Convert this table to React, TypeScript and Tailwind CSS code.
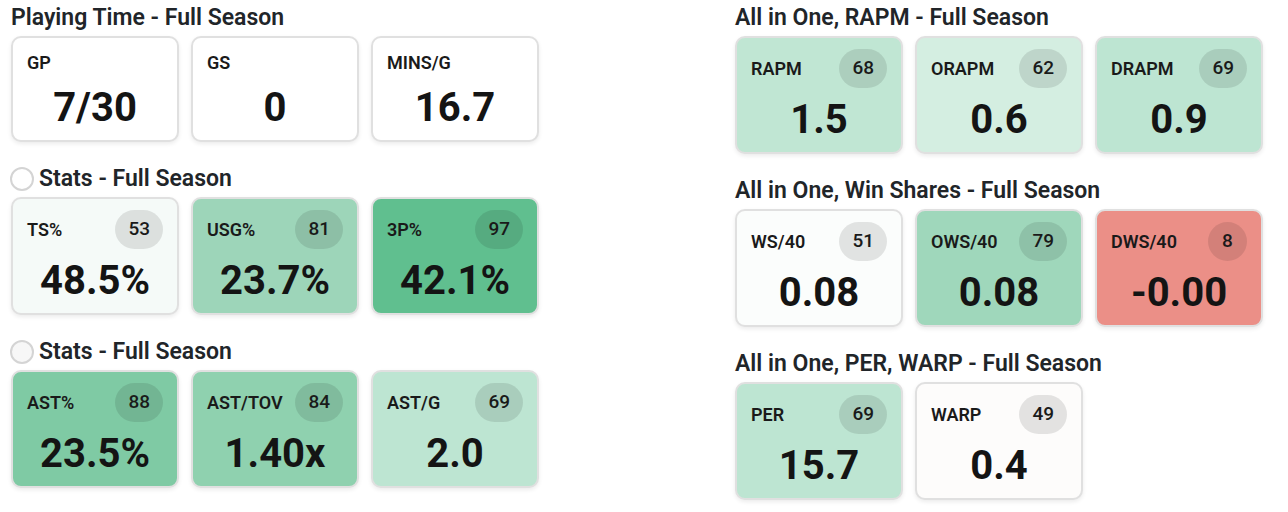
import React from 'react';

interface Stat {
    label: string;
    value: string;
    pct?: number;
    bg: string;
}

interface Section {
    title: string;
    toggle?: 'white' | 'gray';
    stats: Stat[];
}

const left: Section[] = [
    {
        title: 'Playing Time - Full Season',
        stats: [
            { label: 'GP', value: '7/30', bg: 'bg-white' },
            { label: 'GS', value: '0', bg: 'bg-white' },
            { label: 'MINS/G', value: '16.7', bg: 'bg-white' },
        ],
    },
    {
        title: 'Stats - Full Season',
        toggle: 'white',
        stats: [
            { label: 'TS%', value: '48.5%', pct: 53, bg: 'bg-[#f5faf8]' },
            { label: 'USG%', value: '23.7%', pct: 81, bg: 'bg-[#9dd5b9]' },
            { label: '3P%', value: '42.1%', pct: 97, bg: 'bg-[#60bf8f]' },
        ],
    },
    {
        title: 'Stats - Full Season',
        toggle: 'gray',
        stats: [
            { label: 'AST%', value: '23.5%', pct: 88, bg: 'bg-[#7fcaa4]' },
            { label: 'AST/TOV', value: '1.40x', pct: 84, bg: 'bg-[#8fd1af]' },
            { label: 'AST/G', value: '2.0', pct: 69, bg: 'bg-[#bde5d2]' },
        ],
    },
];

const right: Section[] = [
    {
        title: 'All in One, RAPM - Full Season',
        stats: [
            { label: 'RAPM', value: '1.5', pct: 68, bg: 'bg-[#c0e6d3]' },
            { label: 'ORAPM', value: '0.6', pct: 62, bg: 'bg-[#d4eee1]' },
            { label: 'DRAPM', value: '0.9', pct: 69, bg: 'bg-[#bde5d2]' },
        ],
    },
    {
        title: 'All in One, Win Shares - Full Season',
        stats: [
            { label: 'WS/40', value: '0.08', pct: 51, bg: 'bg-[#fbfdfc]' },
            { label: 'OWS/40', value: '0.08', pct: 79, bg: 'bg-[#9fd7bb]' },
            { label: 'DWS/40', value: '-0.00', pct: 8, bg: 'bg-[#eb8f87]' },
        ],
    },
    {
        title: 'All in One, PER, WARP - Full Season',
        stats: [
            { label: 'PER', value: '15.7', pct: 69, bg: 'bg-[#bde5d2]' },
            { label: 'WARP', value: '0.4', pct: 49, bg: 'bg-[#fdfcfb]' },
        ],
    },
];

function StatCard({ stat }: { stat: Stat }) {
    return (
        <div className={`${stat.bg} rounded-[10px] border-2 border-[#e0e0e0] shadow-[0_2px_4px_rgba(0,0,0,0.08)] px-[14px] pt-[11px] pb-[8px] flex flex-col`}>
            <div className={`flex items-center justify-between ${stat.pct === undefined ? 'h-[27px]' : 'h-[39px]'}`}>
                <span className="text-[18px] font-semibold text-[#1a1a1a]">{stat.label}</span>
                {stat.pct !== undefined && (
                    <span className="h-[39px] min-w-[39px] px-[13px] rounded-full bg-black/10 flex items-center justify-center text-[19px] font-medium text-[#1a1a1a]">
                        {stat.pct}
                    </span>
                )}
            </div>
            <div className="mt-[8px] text-center text-[40px] leading-[48px] font-bold text-[#141414]">
                {stat.value}
            </div>
        </div>
    );
}

function StatSection({ section }: { section: Section }) {
    return (
        <div className="mb-[23px]">
            <div className="flex items-center h-7 mb-[4px]">
                {section.toggle && (
                    <span className={`w-6 h-6 mr-[5px] -ml-px rounded-full border-2 border-[#d4d4d4] ${section.toggle === 'gray' ? 'bg-[#f7f7f7]' : 'bg-white'}`} />
                )}
                <h2 className="text-[23px] leading-7 font-semibold text-[#212529]">{section.title}</h2>
            </div>
            <div className="grid grid-cols-3 gap-3">
                {section.stats.map((s) => (
                    <StatCard key={s.label} stat={s} />
                ))}
            </div>
        </div>
    );
}

export default function App() {
    return (
        <main className="w-[1288px] h-[512px] bg-white flex pt-1 pl-[11px] overflow-hidden" style={{ fontFamily: 'Roboto, "Liberation Sans", sans-serif' }}>
            <div className="w-[528px]">
                {left.map((s, i) => (
                    <StatSection key={i} section={s} />
                ))}
            </div>
            <div className="w-[528px] ml-[196px]">
                {right.map((s, i) => (
                    <StatSection key={i} section={s} />
                ))}
            </div>
        </main>
    );
}
